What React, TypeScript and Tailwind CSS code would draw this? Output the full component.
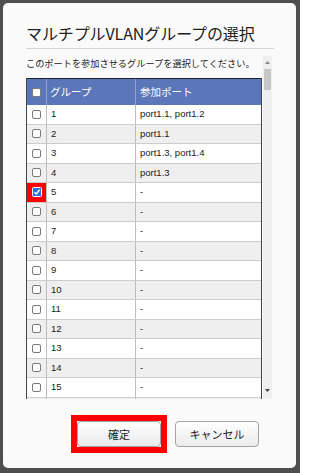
import React from "react";

const rows: { g: string; p: string }[] = [
  { g: "1", p: "port1.1, port1.2" },
  { g: "2", p: "port1.1" },
  { g: "3", p: "port1.3, port1.4" },
  { g: "4", p: "port1.3" },
  { g: "5", p: "-" },
  { g: "6", p: "-" },
  { g: "7", p: "-" },
  { g: "8", p: "-" },
  { g: "9", p: "-" },
  { g: "10", p: "-" },
  { g: "11", p: "-" },
  { g: "12", p: "-" },
  { g: "13", p: "-" },
  { g: "14", p: "-" },
  { g: "15", p: "-" },
  { g: "", p: "" },
];

function Box({ checked = false }: { checked?: boolean }) {
  if (checked) {
    return (
      <svg width="10" height="10" viewBox="0 0 10 10">
        <rect x="0.5" y="0.5" width="9" height="9" rx="1" fill="#2a6fdb" stroke="#ffffff" />
        <path d="M2.4 5.2 L4.2 7 L7.6 2.8" fill="none" stroke="#ffffff" strokeWidth="1.5" />
      </svg>
    );
  }
  return <div className="w-[9px] h-[9px] border border-[#7a7a7a] rounded-[2px] bg-white" />;
}

export default function App() {
  const font = { fontFamily: '"Noto Sans CJK JP", "Liberation Sans", sans-serif' };
  return (
    <div className="w-[300px] h-[473px] bg-[#4f4f4f] pt-[3px] pl-[3px] pr-[4px] pb-[5px]" style={font}>
      <div className="h-full bg-[#fafafa] rounded-[5px] flex flex-col pl-[23px] pr-[22px] pt-[17px]">
        <div className="h-[29px] border-b border-[#d6d6d6] text-[16px] leading-[26px] text-[#222] tracking-[-0.1px] whitespace-nowrap">
          マルチプルVLANグループの選択
        </div>
        <div className="mt-[7px] h-[343px] w-[246px] flex">
          <div className="w-[237px] overflow-hidden">
            <div className="h-[22px] text-[9.2px] leading-[14px] text-[#222] whitespace-nowrap">
              このポートを参加させるグループを選択してください。
            </div>
            <div className="w-[236px] border-x border-[#444]">
              <div className="h-[27px] bg-[#5b77b9] border-t border-[#222] flex text-white text-[10.5px]">
                <div className="w-[20px] border-r border-[#8fa1cf] flex items-center justify-center">
                  <Box />
                </div>
                <div className="w-[89px] border-r border-[#8fa1cf] flex items-center pl-[3px]">グループ</div>
                <div className="flex-1 flex items-center pl-[4px]">参加ポート</div>
              </div>
              {rows.map((r, i) => (
                <div
                  key={i}
                  className={
                    "h-[19.5px] border-b border-[#cccccc] flex text-[9.5px] text-[#1a1a1a] " +
                    (i % 2 === 1 ? "bg-[#efefef]" : "bg-white")
                  }
                  style={{ fontFamily: '"Liberation Sans", "Noto Sans CJK JP", sans-serif' }}
                >
                  <div
                    className={
                      "w-[20px] border-r border-[#bdbdbd] flex items-center justify-center " +
                      (r.g === "5" ? "bg-[#ff0000]" : "")
                    }
                  >
                    {r.g !== "" && <Box checked={r.g === "5"} />}
                  </div>
                  <div className="w-[89px] border-r border-[#bdbdbd] flex items-center pl-[4px]">{r.g}</div>
                  <div className="flex-1 flex items-center pl-[4px]">{r.p}</div>
                </div>
              ))}
            </div>
          </div>
          <div className="w-[9px] h-full bg-[#efefef] flex flex-col items-center">
            <div className="h-[13px] flex items-center justify-center">
              <svg width="5" height="3" viewBox="0 0 5 3">
                <path d="M0 3 L2.5 0 L5 3 Z" fill="#8a8a8a" />
              </svg>
            </div>
            <div className="w-[7px] h-[21px] bg-[#c6c6c6]" />
            <div className="flex-1" />
            <div className="h-[12px] flex items-start justify-center pt-[2px]">
              <svg width="5" height="3" viewBox="0 0 5 3">
                <path d="M0 0 L5 0 L2.5 3 Z" fill="#444" />
              </svg>
            </div>
          </div>
        </div>
        <div className="mt-[16px] flex items-center pl-[45px]">
          <div className="border-[6px] border-[#ff0000] p-0">
            <button className="block w-[84px] h-[26px] rounded-[4px] border border-[#a3a3a3] bg-gradient-to-b from-white to-[#ebebeb] text-[11px] text-[#222]">
              確定
            </button>
          </div>
          <button className="ml-[8px] w-[84px] h-[26px] rounded-[4px] border border-[#a3a3a3] bg-gradient-to-b from-white to-[#ebebeb] text-[11px] text-[#222]">
            キャンセル
          </button>
        </div>
      </div>
    </div>
  );
}
